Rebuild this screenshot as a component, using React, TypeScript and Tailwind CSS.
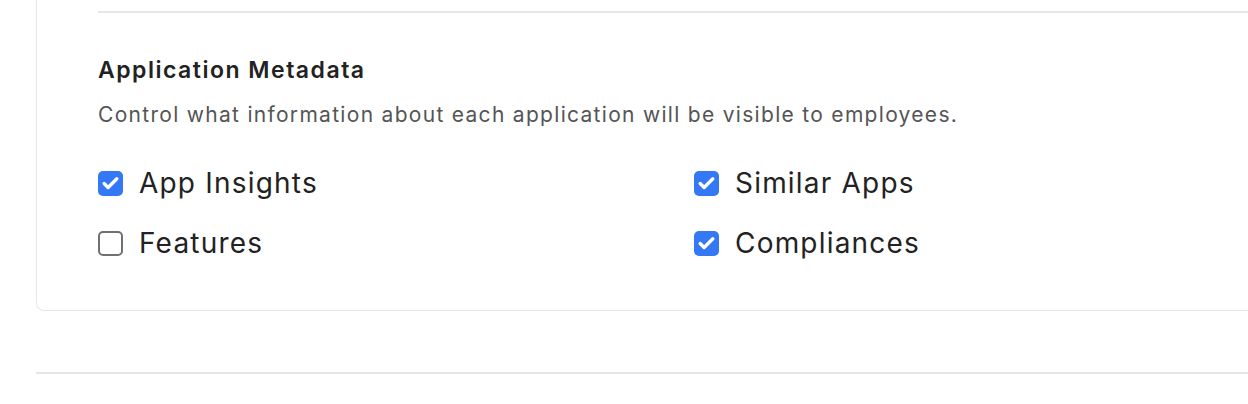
import { Check } from 'lucide-react';

type Item = { label: string; checked: boolean };

const items: Item[] = [
  { label: 'App Insights', checked: true },
  { label: 'Similar Apps', checked: true },
  { label: 'Features', checked: false },
  { label: 'Compliances', checked: true },
];

function Checkbox({ checked }: { checked: boolean }) {
  return checked ? (
    <span className="w-[25px] h-[25px] rounded-[5px] bg-[#3478f6] flex items-center justify-center shrink-0">
      <Check size={19} strokeWidth={4.2} className="text-white" />
    </span>
  ) : (
    <span className="w-[25px] h-[25px] rounded-[5px] border-2 border-[#707070] bg-white shrink-0" />
  );
}

export default function App() {
  return (
    <div className="w-full h-[404px] bg-white overflow-hidden font-['Inter',sans-serif] text-[#222]">
      {/* Card */}
      <div className="ml-9 -mr-6 border-x border-b border-[#e6e6e6] rounded-b-lg pl-[61px] pt-[11px] pb-[54px]">
        <div className="h-[2px] bg-[#e6e6e6]" />

        <h3 className="mt-[42px] text-[23px] leading-[30px] tracking-[1.5px] font-semibold text-[#222]">
          Application Metadata
        </h3>
        <p className="mt-[16px] text-[21px] leading-[28px] tracking-[1.3px] text-[#555]">
          Control what information about each application will be visible to employees.
        </p>

        <div className="mt-[42px] grid grid-cols-[596px_1fr] gap-y-[35px]">
          {items.map((item) => (
            <label key={item.label} className="flex items-center gap-4">
              <Checkbox checked={item.checked} />
              <span className="text-[28px] leading-[25px] tracking-[1.2px] text-[#222]">{item.label}</span>
            </label>
          ))}
        </div>
      </div>

      {/* Divider below card */}
      <div className="ml-9 mt-[61px] h-[2px] bg-[#e6e6e6]" />
    </div>
  );
}
